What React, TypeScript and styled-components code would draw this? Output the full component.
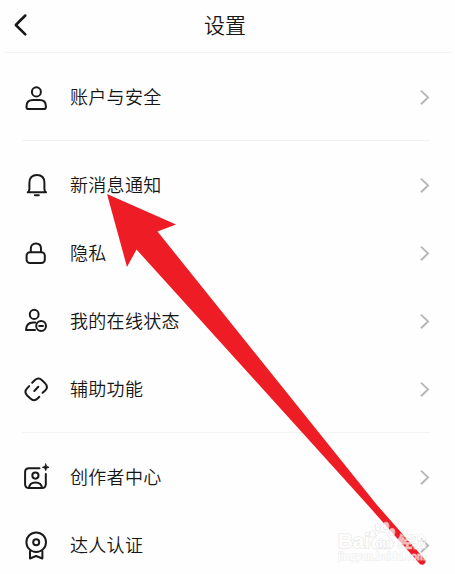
import React from "react";
import styled, { createGlobalStyle } from "styled-components";

const GlobalStyle = createGlobalStyle`
  html, body { margin: 0; background: #fff; overflow: hidden; }
  * { box-sizing: border-box; }
`;

const Screen = styled.main`
  position: relative;
  width: 455px;
  height: 574px;
  overflow: hidden;
  background: #fefefe;
  color: #161616;
  font-family: "Noto Sans CJK SC", "Noto Sans", sans-serif;
  font-weight: 350;
`;

const Header = styled.header`
  display: grid;
  grid-template-columns: 40px 1fr 46px;
  align-items: center;
  height: 53px;
  margin: 0 4px 0 5px;
  border-bottom: 1px solid #f4f4f4;
`;

const BackButton = styled.button`
  display: flex;
  padding: 0 0 3px 7px;
  border: 0;
  background: none;
  color: #161616;
`;

const Title = styled.h1`
  margin: 0;
  padding-bottom: 4px;
  text-align: center;
  font-size: 21px;
  line-height: 30px;
  font-weight: inherit;
`;

const Section = styled.section`
  margin: 0 25px 0 22px;
  padding: 10px 0 9px;
  border-bottom: 1px solid #f2f2f2;
`;

const Row = styled.div`
  display: flex;
  align-items: center;
  height: 68px;
`;

const RowIcon = styled.svg`
  flex: none;
  width: 28px;
  height: 28px;
  overflow: visible;
  fill: none;
  stroke: #1a1a1a;
  stroke-width: 2;
  stroke-linecap: round;
  stroke-linejoin: round;
`;

const Label = styled.span`
  flex: 1;
  margin-left: 20px;
  padding-bottom: 2px;
  font-size: 18px;
  letter-spacing: 0.3px;
  line-height: 26px;
`;

const Chevron = styled.svg`
  width: 12px;
  height: 18px;
  margin: 0 -1px 0 0;
  fill: none;
  stroke: #b7b7b7;
  stroke-width: 2;
`;

const Pointer = styled.svg`
  position: absolute;
  inset: 0;
  pointer-events: none;
`;

const icons = {
  person: (
    <>
      <ellipse cx="14.4" cy="8.900" rx="4.500" ry="4.600" />
      <path d="M4.500 23.200C4.500 19 7 16.900 11 16.900h6.500c4 0 6.400 2.100 6.400 6.300V24c0 1.400-.7 2.100-2 2.100H6.500c-1.400 0-2-.7-2-2.100z" />
    </>
  ),
  bell: (
    <path d="M5.700 21.200h18.400M6.700 20.800c.5-1 .7-2 .7-3.500v-5.600C7.400 6.900 10.200 4 14.900 4S22.400 6.900 22.400 11.700v5.600c0 1.500.2 2.500.7 3.500M12.900 24.200h3.900" />
  ),
  lock: (
    <>
      <rect x="4.600" y="13.200" width="18.200" height="10.900" rx="3.400" />
      <path d="M8.800 13V9.700C8.800 6.400 10.800 4.500 13.900 4.500s5.100 1.900 5.100 5.200V13" />
    </>
  ),
  status: (
    <>
      <ellipse cx="12.200" cy="7.400" rx="4.400" ry="4.600" />
      <path d="M13 23H4c0-4.800 2.500-7.600 7.400-7.600h2" />
      <circle cx="19.100" cy="19" r="4.900" />
      <path d="M17.200 19h3.800" />
    </>
  ),
  link: (
    <>
      <path d="M10.200 7.800l2.500-2.500c2.400-2.200 5-2.300 7.300-.1l3.200 3.200c2.300 2.400 2.200 5 0 7.200l-2.600 2.200" />
      <path d="M7.200 11.100l-2.200 2.300c-2.100 2.300-2.100 4.800.2 7.100l3.200 3c2.300 2.200 4.900 2.200 7.200 0l1.700-1.700M12.300 16l4-4.200" />
    </>
  ),
  creator: (
    <>
      <path d="M17.500 5.200H7c-2.600 0-3.900 1.300-3.900 3.800V21.300C3.100 23.800 4.400 25.100 7 25.100h12.900c2.600 0 3.900-1.300 3.900-3.800V11" />
      <circle cx="13.400" cy="12.600" r="3.100" />
      <path d="M7 24.700c.5-3.400 2.800-5.200 6.500-5.200s6 1.800 6.500 5.200" />
      <path d="M23.700 .9l.9 2.500 2.500.9-2.500.9-.9 2.500-.9-2.500-2.500-.9 2.500-.9z" fill="#1a1a1a" strokeWidth=".8" />
    </>
  ),
  medal: (
    <>
      <circle cx="14.200" cy="11.200" r="9.800" />
      <circle cx="14.200" cy="11.300" r="3" />
      <path d="M8 20.300v7.200l6.100-2.500 6.300 2.500v-7.200" />
    </>
  ),
};

type IconName = keyof typeof icons;

const sections: { label: string; icon: IconName }[][] = [
  [{ label: "账户与安全", icon: "person" }],
  [
    { label: "新消息通知", icon: "bell" },
    { label: "隐私", icon: "lock" },
    { label: "我的在线状态", icon: "status" },
    { label: "辅助功能", icon: "link" },
  ],
  [
    { label: "创作者中心", icon: "creator" },
    { label: "达人认证", icon: "medal" },
  ],
];

const WatermarkText = styled.text`
  font-family: "Liberation Sans", "Noto Sans CJK SC", sans-serif;
  font-weight: 700;
  fill: #fff;
  stroke: #e2e2e2;
  paint-order: stroke;
`;

function Overlay() {
  return (
    <Pointer width="455" height="574" viewBox="0 0 455 574" aria-hidden="true">
      <path
        fill="#ee1c25"
        d="M107 194L176 224.500L157.500 231.500L377 505L425 559.500Q426.500 563 423.500 564.500Q420.500 565.500 418.500 562.500L367.700 505L136.500 249.500L127 267Z"
      />
      <g opacity=".7">
        <WatermarkText x="338" y="548" fontSize="20" textLength="32" lengthAdjust="spacingAndGlyphs" strokeWidth="1.600">Bai</WatermarkText>
        <g fill="#fff" stroke="#dedede" strokeWidth=".9">
          <ellipse cx="372.500" cy="534" rx="3" ry="3.600" />
          <ellipse cx="378" cy="527" rx="3.100" ry="4" />
          <ellipse cx="386" cy="526" rx="3.100" ry="4" />
          <ellipse cx="392" cy="532" rx="3" ry="3.800" />
          <path d="M382 532c5 0 6 5 9.500 8 4 4 1.500 9-3 9-3-.5-8-.5-11 0-5.500.8-8.500-5-4.500-9 3.500-3 4.500-8 9-8z" />
        </g>
        <WatermarkText x="375.500" y="546.500" fontSize="11.500" strokeWidth="1.600">du</WatermarkText>
        <WatermarkText x="398" y="547" fontSize="15" textLength="28" lengthAdjust="spacingAndGlyphs" strokeWidth="1">经验</WatermarkText>
        <WatermarkText x="338" y="560" fontSize="10.500" textLength="88" lengthAdjust="spacingAndGlyphs" strokeWidth=".9">jingyan.baidu.com</WatermarkText>
      </g>
    </Pointer>
  );
}

export default function App() {
  return (
    <>
      <GlobalStyle />
      <Screen>
        <Header>
          <BackButton aria-label="返回">
            <svg width="18" height="24" viewBox="0 0 18 24" fill="none" stroke="currentColor" strokeWidth="2.500" strokeLinecap="round" strokeLinejoin="round">
              <path d="M13.300 2.500L3.800 12l9.500 9.300" />
            </svg>
          </BackButton>
          <Title>设置</Title>
        </Header>
        {sections.map((rows, index) => (
          <Section key={index}>
            {rows.map(({ label, icon }) => (
              <Row key={label}>
                <RowIcon viewBox="0 0 28 28">{icons[icon]}</RowIcon>
                <Label>{label}</Label>
                <Chevron viewBox="0 0 12 18">
                  <path d="M2 2.600L9 9.400l-7 6.800" />
                </Chevron>
              </Row>
            ))}
          </Section>
        ))}
        <Overlay />
      </Screen>
    </>
  );
}
